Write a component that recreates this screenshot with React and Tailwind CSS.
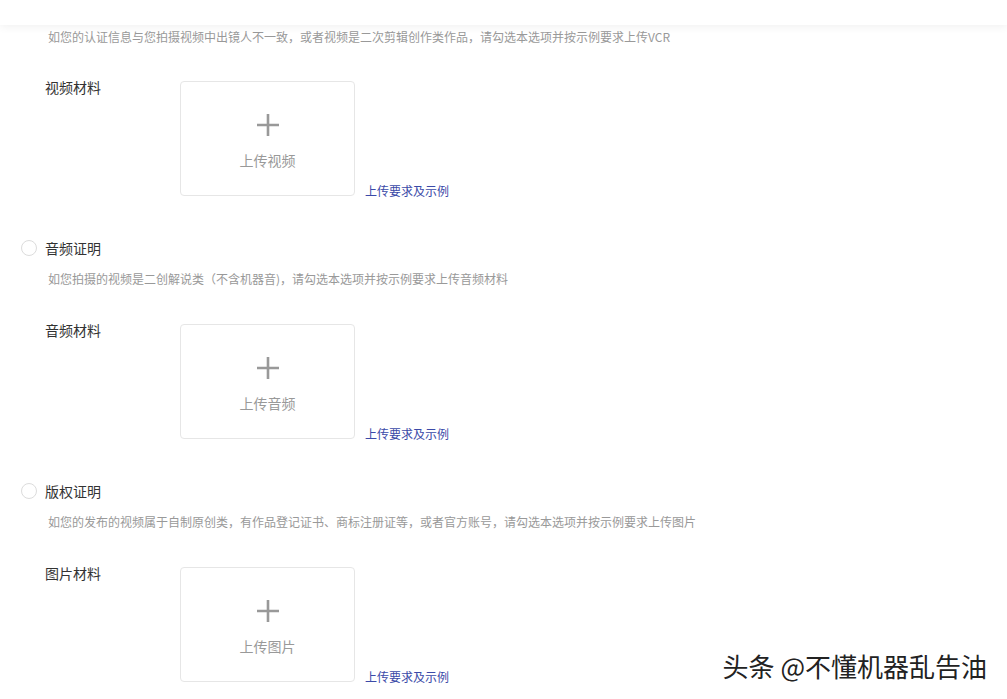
const font = { fontFamily: '"Microsoft YaHei", "Noto Sans CJK SC", "Noto Sans", sans-serif' };

const PlusIcon = () => (
  <svg width="24" height="24" viewBox="0 0 24 24" className="text-[#999]">
    <path d="M12 1v22M1 12h22" stroke="currentColor" strokeWidth="2.6" fill="none" />
  </svg>
);

const Upload = ({ label, text }) => (
  <div className="flex items-start pl-[45px]">
    <div className="w-[135px] -mt-[2px] text-[14px] leading-[16px] text-[#333]">{label}</div>
    <div className="flex items-end">
      <div className="w-[175px] h-[115px] rounded-[4px] border border-[#e6e6e6] flex flex-col items-center pt-[31px]">
        <PlusIcon />
        <div className="mt-[14px] text-[14px] leading-[18px] text-[#999]">{text}</div>
      </div>
      <a className="ml-[10px] -mb-[3px] text-[12px] leading-[16px] text-[#3b4aa8]">上传要求及示例</a>
    </div>
  </div>
);

const Section = ({ title, desc, label, text }) => (
  <div className="flex flex-col">
    <div className="flex items-center h-[20px] pl-[21px]">
      <span className="w-4 h-4 rounded-full border border-[#dcdcdc] bg-white" />
      <span className="ml-[8px] text-[14px] leading-[20px] text-[#333]">{title}</span>
    </div>
    <div className="pl-[48px] mt-[12px] text-[12px] leading-[18px] text-[#999]">{desc}</div>
    <div className="mt-[36px]">
      <Upload label={label} text={text} />
    </div>
  </div>
);

export default function App() {
  return (
    <div className="relative w-[1007px] h-[699px] overflow-hidden bg-white" style={font}>
      <div className="relative z-10 h-[25px] bg-white shadow-[0_2px_8px_rgba(0,0,0,0.06)]" />
      <div className="flex flex-col">
        <div className="pl-[48px] pt-[3px] text-[12px] leading-[18px] text-[#999]">
          如您的认证信息与您拍摄视频中出镜人不一致，或者视频是二次剪辑创作类作品，请勾选本选项并按示例要求上传VCR
        </div>
        <div className="mt-[35px]">
          <Upload label="视频材料" text="上传视频" />
        </div>
        <div className="mt-[42px] flex flex-col gap-[42px]">
          <Section
            title="音频证明"
            desc="如您拍摄的视频是二创解说类（不含机器音)，请勾选本选项并按示例要求上传音频材料"
            label="音频材料"
            text="上传音频"
          />
          <Section
            title="版权证明"
            desc="如您的发布的视频属于自制原创类，有作品登记证书、商标注册证等，或者官方账号，请勾选本选项并按示例要求上传图片"
            label="图片材料"
            text="上传图片"
          />
        </div>
      </div>
      <div
        className="absolute right-[20px] bottom-[17px] text-[26px] leading-[32px] text-[#222]"
        style={{ textShadow: "1px 1px 0 #fff, -1px -1px 0 #fff, 1px -1px 0 #fff, -1px 1px 0 #fff" }}
      >
        头条 @不懂机器乱告油
      </div>
    </div>
  );
}
